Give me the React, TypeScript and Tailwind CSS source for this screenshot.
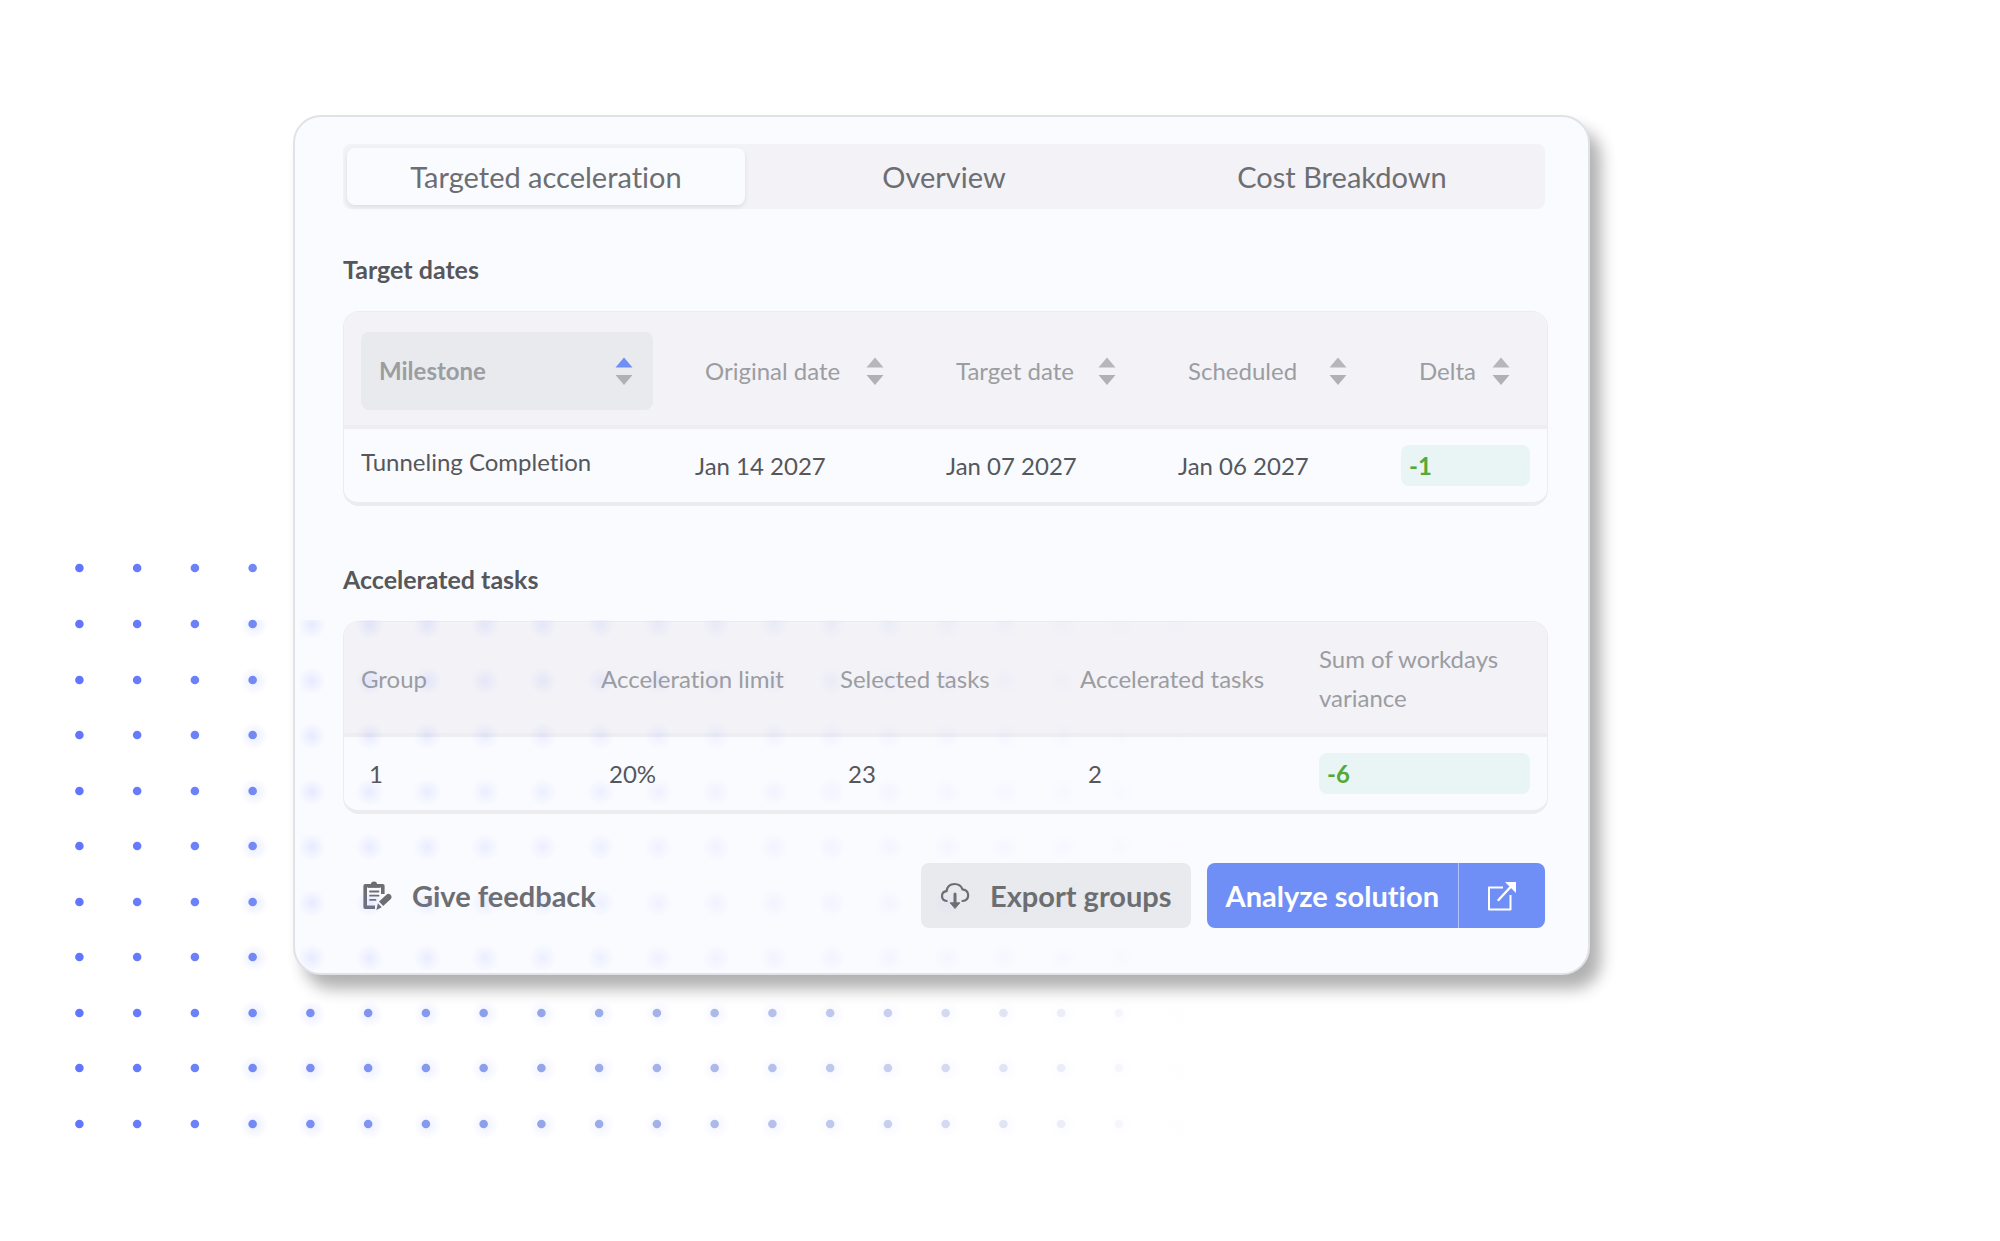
import { useState } from 'react';
import clsx from 'clsx';

const TABS = ['Targeted acceleration', 'Overview', 'Cost Breakdown'];

const DATE_COLUMNS = [
  { key: 'milestone', label: 'Milestone' },
  { key: 'original', label: 'Original date' },
  { key: 'target', label: 'Target date' },
  { key: 'scheduled', label: 'Scheduled' },
  { key: 'delta', label: 'Delta' },
];

const MILESTONES = [
  {
    milestone: 'Tunneling Completion',
    original: 'Jan 14 2027',
    target: 'Jan 07 2027',
    scheduled: 'Jan 06 2027',
    delta: '-1',
  },
];

const GROUPS = [{ group: '1', limit: '20%', selected: '23', accelerated: '2', variance: '-6' }];

const DOT_ROWS = [568, 624, 680, 735, 791, 846, 902, 957, 1013, 1068, 1124];
const DOT_COLUMNS = Array.from({ length: 20 }, (_, i) => 79.4 + i * 57.75);

const FeedbackIcon = () => (
  <svg className="w-[30px] h-[30px]" viewBox="0 0 30 30" fill="none" aria-hidden="true">
    <path d="M20.800 13V4.700H3.200v21.600H13" stroke="currentColor" strokeWidth="3.600" strokeLinejoin="round" />
    <path d="M6 6.800V3h2.800C9.200 1.300 10.400.500 12 .500s2.800.8 3.200 2.500H18v3.800z" fill="currentColor" />
    <path d="M8 10.500h8.500M8 14.700h8.500M8 18.900h5.500" stroke="currentColor" strokeWidth="1.800" strokeLinecap="round" />
    <path d="M17 20.500 24.400 13.700c1.400-1.200 3.100-1.100 4.300.2 1.200 1.300 1.100 3-.2 4.300l-7.300 6.800z" fill="currentColor" />
    <path d="m15.900 22.200 3.800 4.100-5.300 2.700z" fill="currentColor" />
  </svg>
);

const CloudDownloadIcon = () => (
  <svg className="w-[30px] h-[30px]" viewBox="0 0 30 30" fill="none" aria-hidden="true">
    <path
      d="M6.700 20C3.600 19.800 2 17.600 2 15.100c0-2.700 1.900-4.700 4.600-5C7.200 5.700 10.400 3 14.600 3c3.700 0 6.700 1.900 7.900 5.400 3.500.4 5.700 2.700 5.700 5.900 0 3.300-2.100 5.400-5.700 5.700"
      stroke="currentColor"
      strokeWidth="2.200"
      strokeLinecap="round"
    />
    <path d="M15 13v9" stroke="currentColor" strokeWidth="3" strokeLinecap="round" />
    <path d="M10.200 21.800h9.600L15 27.500z" fill="currentColor" stroke="currentColor" strokeLinejoin="round" />
  </svg>
);

const OpenIcon = () => (
  <svg className="w-[30px] h-[30px]" viewBox="0 0 30 30" fill="none" aria-hidden="true">
    <path d="M16 6.500H2v22h21.500V14" stroke="currentColor" strokeWidth="2" strokeLinejoin="round" />
    <path d="M11.500 19 24 5.500" stroke="currentColor" strokeWidth="2.400" strokeLinecap="round" />
    <path d="M18 1h11v11z" fill="currentColor" />
  </svg>
);

const SortIcon = ({ active }: { active?: boolean }) => (
  <svg className="w-[18px] h-[28px] shrink-0" viewBox="0 0 18 28" aria-hidden="true">
    <path d="M9 0.500 17.500 10.500H0.500z" fill={active ? '#6f8ff7' : '#b6b7bb'} />
    <path d="M0.500 18H17.500L9 28z" fill="#b0b1b5" />
  </svg>
);

const Badge = ({ value }: { value: string }) => (
  <div className="h-[41px] rounded-lg bg-[#e9f5f5] pl-2 font-bold leading-[41px] text-[#54a939]">{value}</div>
);

// Dot grid that fades out to the right
function DotGrid() {
  return (
    <svg className="pointer-events-none absolute left-0 top-0" width="1240" height="1160" aria-hidden="true">
      <defs>
        <linearGradient id="dot-fade" gradientUnits="userSpaceOnUse" x1="79" y1="0" x2="1200" y2="0">
          <stop offset="0" stopColor="#6176ff" />
          <stop offset="0.16" stopColor="#7288f4" />
          <stop offset="0.35" stopColor="#8c9fea" />
          <stop offset="0.52" stopColor="#a7b5e6" />
          <stop offset="0.62" stopColor="#b9c4ea" />
          <stop offset="0.72" stopColor="#cad2ec" />
          <stop offset="0.82" stopColor="#e2e6f4" />
          <stop offset="0.93" stopColor="#f8f8fb" />
          <stop offset="0.98" stopColor="#ffffff" />
        </linearGradient>
      </defs>
      <g fill="url(#dot-fade)">
        {DOT_ROWS.map((y) => DOT_COLUMNS.map((x) => <circle key={`${x}-${y}`} cx={x} cy={y} r="4.300" />))}
      </g>
    </svg>
  );
}

// Soft glow of the same grid, laid over the panel
function DotGlow() {
  return (
    <svg className="pointer-events-none absolute left-0 top-0" width="1240" height="1160" aria-hidden="true">
      <defs>
        <radialGradient id="glow">
          <stop offset="0" stopColor="#7f92ff" stopOpacity="0.170" />
          <stop offset="0.45" stopColor="#7f92ff" stopOpacity="0.090" />
          <stop offset="1" stopColor="#7f92ff" stopOpacity="0" />
        </radialGradient>
        <clipPath id="glow-area">
          <rect x="240" y="620" width="1000" height="540" />
        </clipPath>
      </defs>
      <g clipPath="url(#glow-area)">
        {DOT_ROWS.slice(1).map((y) =>
          DOT_COLUMNS.slice(3).map((x, i) => (
            <circle key={`${x}-${y}`} cx={x + 1.5} cy={y + 1} r="14" fill="url(#glow)" opacity={1 - i / 17} />
          ))
        )}
      </g>
    </svg>
  );
}

export default function App() {
  const [tab, setTab] = useState(TABS[0]);
  const [sortKey, setSortKey] = useState('milestone');

  return (
    <div className="relative min-h-screen overflow-hidden bg-white pb-[266px] pl-[293px] pr-[410px] pt-[115px] font-['Lato',sans-serif] text-[24px] text-[#55575b] [font-variant-ligatures:none]">
      <DotGrid />

      <main className="relative rounded-[28px] border-2 border-[#e1e2e7] bg-[#fafbff] pb-[45px] pl-12 pr-10 pt-[27px] shadow-[11px_14px_16px_rgba(0,0,0,0.31)]">
        <div role="tablist" className="mr-[3px] grid h-[65px] grid-cols-3 rounded-lg bg-[#f3f2f7] p-1">
          {TABS.map((name) => (
            <button
              key={name}
              type="button"
              role="tab"
              aria-selected={tab === name}
              onClick={() => setTab(name)}
              className={clsx(
                'rounded-lg text-[29px] text-[#6c6e72]',
                tab === name && 'bg-[#fafbff] shadow-[0_2px_5px_rgba(0,0,0,0.09)]'
              )}
            >
              {name}
            </button>
          ))}
        </div>

        <h2 className="mb-[26px] mt-11 text-[25px] font-bold leading-8">Target dates</h2>
        <div className="overflow-hidden rounded-2xl border border-b-4 border-[#ebebf0]">
          <table className="w-full table-fixed border-separate border-spacing-0 text-left">
            <colgroup>
              <col />
              <col className="w-[251px]" />
              <col className="w-[232px]" />
              <col className="w-[231px]" />
              <col className="w-[163px]" />
            </colgroup>
            <thead className="bg-[#f3f2f7] text-[#9b9da1]">
              <tr>
                {DATE_COLUMNS.map(({ key, label }) => (
                  <th key={key} scope="col" className="h-[117px] border-b-4 border-[#eeeef2] px-[17px] pt-1 font-normal">
                    <button
                      type="button"
                      onClick={() => setSortKey(key)}
                      className={clsx(
                        'flex h-[78px] w-full items-center justify-between rounded-lg pl-[18px] pr-5',
                        sortKey === key && 'bg-[#e9eaee] font-bold'
                      )}
                    >
                      {label}
                      <SortIcon active={sortKey === key} />
                    </button>
                  </th>
                ))}
              </tr>
            </thead>
            <tbody>
              {MILESTONES.map((row) => (
                <tr key={row.milestone}>
                  <td className="h-[73px] px-[17px] pb-2">{row.milestone}</td>
                  <td className="px-[25px]">{row.original}</td>
                  <td className="px-[25px]">{row.target}</td>
                  <td className="px-[25px]">{row.scheduled}</td>
                  <td className="px-[17px]">
                    <Badge value={row.delta} />
                  </td>
                </tr>
              ))}
            </tbody>
          </table>
        </div>

        <h2 className="mb-[26px] mt-[57px] text-[25px] font-bold leading-8">Accelerated tasks</h2>
        <div className="overflow-hidden rounded-2xl border border-b-4 border-[#ebebf0]">
          <table className="w-full table-fixed border-separate border-spacing-0 text-left">
            <colgroup>
              <col className="w-[240px]" />
              <col className="w-[239px]" />
              <col className="w-[240px]" />
              <col className="w-[239px]" />
              <col />
            </colgroup>
            <thead className="bg-[#f3f2f7] text-[#9b9da1]">
              <tr>
                {['Group', 'Acceleration limit', 'Selected tasks', 'Accelerated tasks', 'Sum of workdays variance'].map(
                  (label) => (
                    <th
                      key={label}
                      scope="col"
                      className="h-[115px] border-b-4 border-[#eeeef2] px-[17px] pt-px font-normal leading-[39px]"
                    >
                      {label}
                    </th>
                  )
                )}
              </tr>
            </thead>
            <tbody>
              {GROUPS.map((row) => (
                <tr key={row.group}>
                  <td className="h-[73px] px-[25px]">{row.group}</td>
                  <td className="px-[25px]">{row.limit}</td>
                  <td className="px-[25px]">{row.selected}</td>
                  <td className="px-[25px]">{row.accelerated}</td>
                  <td className="px-[17px]">
                    <Badge value={row.variance} />
                  </td>
                </tr>
              ))}
            </tbody>
          </table>
        </div>

        <div className="mr-[3px] mt-[49px] flex h-[65px] items-stretch text-[29px] font-bold text-[#6c6e72]">
          <button type="button" className="mr-auto flex items-center gap-5 pl-[19px]">
            <FeedbackIcon />
            Give feedback
          </button>
          <button type="button" className="flex items-center gap-5 rounded-lg bg-[#e9eaee] px-[19px]">
            <CloudDownloadIcon />
            Export groups
          </button>
          <div className="ml-4 flex rounded-lg bg-[#6f8ff7] text-white">
            <button type="button" className="px-[19px]">
              Analyze solution
            </button>
            <button
              type="button"
              aria-label="Open solution in new window"
              className="flex w-[87px] items-center justify-center border-l border-[#b3c4fb]"
            >
              <OpenIcon />
            </button>
          </div>
        </div>
      </main>

      <DotGlow />
    </div>
  );
}
